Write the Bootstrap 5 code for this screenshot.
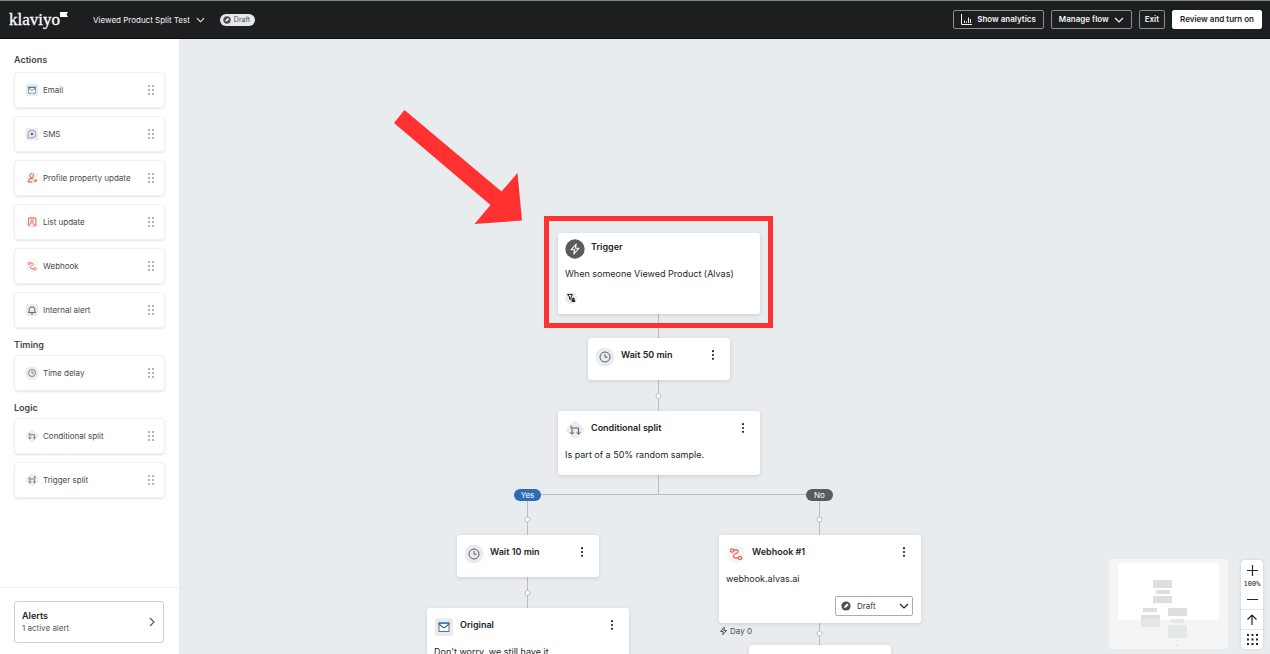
<!DOCTYPE html>
<html lang="en">
<head>
<meta charset="utf-8">
<meta name="viewport" content="width=device-width, initial-scale=1">
<title>Viewed Product Split Test</title>
<link href="https://cdn.jsdelivr.net/npm/bootstrap@5.3.0/dist/css/bootstrap.min.css" rel="stylesheet">
<style>
body{font-family:Inter,"Liberation Sans",sans-serif;font-size:9px;line-height:16px;color:#232628;background:#e8ecee}
svg{display:block;fill:none;stroke:currentColor;flex:none}
.topbar{height:39px;background:#1c1e20;border-top:1px solid #7b8d80;border-bottom:1px solid #0b0c0d;color:#f4f5f5;padding:0 8px 0 9px}
.logo{font:17px/20px "Liberation Serif",serif;color:#fff;-webkit-text-stroke:.3px #fff}
.flow-name{background:none;border:0;color:inherit;font-size:8px;padding:0;margin-left:25px;gap:6px}
.draft-pill{background:#e6e9eb;color:#4b4f52;border-radius:6px;height:12px;padding:0 5px 0 3px;margin-left:15px;font-size:7px;line-height:12px;gap:3px}
.bar-actions{gap:7px}
.bar-btn{--bs-btn-padding-x:7px;--bs-btn-padding-y:0;--bs-btn-font-size:8px;--bs-btn-font-weight:600;--bs-btn-line-height:17px;--bs-btn-border-radius:2px;--bs-btn-color:#f4f5f5;--bs-btn-border-color:#8b8f91;--bs-btn-hover-color:#fff;--bs-btn-hover-border-color:#fff;white-space:nowrap;gap:5px}
.bar-btn.compact{--bs-btn-padding-x:5px}
.bar-btn.solid{--bs-btn-bg:#fff;--bs-btn-color:#1c1e20;--bs-btn-border-color:#fff}
.side{width:179px;background:#fff}
.palette{padding:0 14px}
.side h2{font-size:9px;line-height:16px;font-weight:600;color:#43474a;margin:0;padding:9px 0 2px}
.side h2:first-child{padding-top:13px;padding-bottom:4px}
.tile{height:36px;border:1px solid #eff0f1;border-radius:4px;box-shadow:0 1px 2px #0000001c;padding:0 10px;font-size:8px;color:#44494c}
.tile .grip{color:#8f9496}
.alerts{border:1px solid #cdd1d3;border-radius:3px;background:#fff;height:42px;padding:0 8px 0 7px;font-size:8px;line-height:13px;color:#555a5d;text-align:left}
.alerts strong{font-size:9px;font-weight:600;color:#232628}
.side-foot{border-top:1px solid #eceeef;padding:13px 15px 11px 14px}
.canvas{min-width:0}
.wires{left:0;top:0;stroke:#b9bdbf}
.step{background:#fff;border-radius:3px;box-shadow:0 1px 4px #0000001f;padding:9px 9px 0 7px;width:202px}
.step.small-step{width:142px;height:42px}
.step h3{font-size:9px;line-height:16px;font-weight:600;margin:0}
.step p{margin:7px 0 0}
.ico{width:20px;height:20px;margin-right:6px}
.kebab{border:0;background:none;padding:0;width:16px;height:16px;color:#232628}
.n-trigger{left:379px;top:194px;height:81px;padding-top:6px}
.n-wait50{left:409px;top:299px}
.n-split{left:379px;top:372px;height:64px}
.n-wait10{left:278px;top:496px}
.n-original{left:248px;top:569px;height:100px}
.n-webhook{left:540px;top:496px;height:88px}
.n-next{left:570px;top:606px}
.n-day{left:540px;top:584px;font-size:8px;color:#4b4f52;gap:2px}
.filter-dot{width:12px;height:12px;margin-top:10px}
.branch{width:27px;height:12px;border-radius:6px;font-size:8px;line-height:12px;color:#fff;text-align:center;top:450px}
.b-yes{left:335px;background:#2b6cb5}
.b-no{left:627px;background:#595c5e}
.state{width:78px;margin:9px -1px 0 auto}
.state select{font-size:8px;line-height:18px;padding:0 0 0 21px;height:20px;border:1px solid #a9adaf;border-radius:2px;background:#fff;color:#35393c;appearance:none;width:100%}
.state .s-dot{left:6px;top:5px}
.state .s-chev{right:4px;top:7px;pointer-events:none}
.callout{left:365px;top:177px;width:229px;height:112px;border:5px solid #ff3131;pointer-events:none}
.arrow{left:214px;top:71px;fill:#ff3131;stroke:none;pointer-events:none}
.minimap{right:42px;bottom:5px;width:119px;height:90px;background:#f4f5f4;border-radius:3px}
.zoomer{right:7px;bottom:5px;width:22px;background:#fff;border-radius:4px;box-shadow:0 0 3px #00000022}
.zoomer button{border:0;background:none;padding:0;width:22px;height:20px;display:grid;place-items:center;color:#232628}
.zoomer button.ruled{border-top:1px solid #e3e6e7}
.zoomer output{font:7px/9px "DejaVu Sans Mono",monospace;text-align:center}
</style>
</head>
<body class="vh-100 d-flex flex-column overflow-hidden">
<svg class="d-none">
  <symbol id="grip" viewBox="0 0 6 10"><g fill="currentColor" stroke="none"><circle cx="1" cy="1" r=".9"/><circle cx="5" cy="1" r=".9"/><circle cx="1" cy="5" r=".9"/><circle cx="5" cy="5" r=".9"/><circle cx="1" cy="9" r=".9"/><circle cx="5" cy="9" r=".9"/></g></symbol>
  <symbol id="dots" viewBox="0 0 4 10"><g fill="currentColor" stroke="none"><circle cx="2" cy="1.2" r="1.1"/><circle cx="2" cy="5" r="1.1"/><circle cx="2" cy="8.8" r="1.1"/></g></symbol>
  <symbol id="chev" viewBox="0 0 10 6"><path d="M1 1l4 4 4-4" stroke-width="1.2"/></symbol>
  <symbol id="draft" viewBox="0 0 10 10"><circle cx="5" cy="5" r="4.6" fill="#4b4f52" stroke="none"/><path d="M3 7l.5-2 2.600-2.400 1.500 1.400L5 6.500z" fill="#fff" stroke="none"/></symbol>
  <symbol id="mail" viewBox="0 0 20 20"><rect x="1" y="1" width="18" height="18" rx="3" fill="#e8ecee" stroke="none"/><rect x="5" y="6" width="10" height="8.500" fill="#fff" stroke="#6b7073"/><path d="M4.500 6.200h11M5 7l4 3.400h2L15 7" stroke="#2b6cb5" stroke-width="1.200"/></symbol>
  <symbol id="sms" viewBox="0 0 20 20"><rect x="1" y="1" width="18" height="18" rx="3" fill="#e8ecee" stroke="none"/><path d="M4.500 15.500V10a5.500 5.500 0 1 1 5.500 5.500z" stroke="#777c7f"/><circle cx="10" cy="10" r="1.800" fill="#2b6cb5" stroke="none"/></symbol>
  <symbol id="person" viewBox="0 0 20 20"><path d="M10 0l8.500 5v10L10 20l-8.500-5V5z" fill="#f4f5f4" stroke="none"/><g stroke="#ee6a5f" stroke-width="1.500"><circle cx="9.500" cy="6.500" r="2.700"/><path d="M10.500 15.500H5c0-4 2-5 4.500-5 1.500 0 2 .3 2.500 1M12 14h4.500M14.500 12l2 2-2 2"/></g></symbol>
  <symbol id="list" viewBox="0 0 20 20"><path d="M10 0l8.500 5v10L10 20l-8.500-5V5z" fill="#f0f1f1" stroke="none"/><g stroke="#ee6a5f" stroke-width="1.300"><path d="M5 15.500V4.500h10.500v10M12 15.500h3.500v-3M8.500 3.500v2M12.500 3.500v2"/><circle cx="10" cy="8.500" r="1.600"/><path d="M6.500 15.500c0-3.500 1.500-4.500 3.500-4.500s2 1 2.500 3.500"/></g></symbol>
  <symbol id="hook" viewBox="0 0 20 20"><path d="M10 0l8.500 5v10L10 20l-8.500-5V5z" fill="#f4f5f4" stroke="none"/><g stroke="#ee6a5f" stroke-width="1.300"><circle cx="6.200" cy="6.500" r="1.700"/><circle cx="14" cy="14" r="1.700"/><path d="M8 6h2.500c1.500 0 1.800 1 1.500 2s-1.500 1.500-2.500 1.700-2 1-2 2.300.8 2 2 2h2.800"/></g></symbol>
  <symbol id="bell" viewBox="0 0 20 20"><rect x="1" y="1" width="18" height="18" rx="3" fill="#e8ecee" stroke="none"/><path d="M4.500 13.500c1.500-1 1.500-2 1.500-4a4 4 0 0 1 8 0c0 2 0 3 1.500 4zM8.500 15.500h3" stroke="#4b4f52" stroke-width="1.200"/></symbol>
  <symbol id="clock" viewBox="0 0 20 20"><circle cx="10" cy="10" r="9.500" fill="#e8ecee" stroke="none"/><g stroke="#5a5f62"><circle cx="10" cy="10" r="5"/><path d="M10 7v3.200h2.600"/></g></symbol>
  <symbol id="split" viewBox="0 0 20 20"><rect x="3" y="3" width="14" height="14" rx="2" transform="rotate(45 10 10)" fill="#e8ecee" stroke="none"/><path d="M6 5.500v2.500h7.500v6M7 8v6M5 12.300l2 1.800 2-1.800M11.500 12.300l2 1.800 2-1.800" stroke="#5a5f62"/></symbol>
  <symbol id="tsplit" viewBox="0 0 20 20"><rect x="3" y="3" width="14" height="14" rx="2" transform="rotate(45 10 10)" fill="#e8ecee" stroke="none"/><path d="M6 5.500v3h7.500V14M7 8.500V14M5 12.300l2 1.800 2-1.800M11.500 12.300l2 1.800 2-1.800M14.500 4l-1.500 2h2.500L14 7.800" stroke="#5a5f62"/></symbol>
  <symbol id="bolt" viewBox="0 0 12 12"><path d="M7 1L2 6.700h3.500L5 11l5-5.700H6.500z" stroke-width="1.300" stroke-linejoin="round"/></symbol>
</svg>

<header class="topbar d-flex align-items-center flex-shrink-0">
  <a href="#" class="d-flex text-decoration-none"><span class="logo">klaviyo</span><svg width="8" height="20"><path d="M0 2h8L6.500 4.500 8 7H0z" fill="#fff" stroke="none"/></svg></a>
  <button class="flow-name d-flex align-items-center" type="button">Viewed Product Split Test <svg width="9" height="6"><use href="#chev"/></svg></button>
  <span class="draft-pill d-flex align-items-center"><svg width="8" height="8"><use href="#draft"/></svg>Draft</span>
  <div class="bar-actions d-flex ms-auto">
    <button type="button" class="btn bar-btn d-flex align-items-center"><svg width="11" height="11"><path d="M.5 0v10.500H11M3.500 9V6.500M5.500 9V7.500M7.500 9V3.500M9.500 9V5"/></svg>Show analytics</button>
    <button type="button" class="btn bar-btn d-flex align-items-center">Manage flow <svg width="10" height="6"><use href="#chev"/></svg></button>
    <button type="button" class="btn bar-btn compact">Exit</button>
    <button type="button" class="btn bar-btn solid">Review and turn on</button>
  </div>
</header>

<div class="d-flex flex-fill overflow-hidden">
  <aside class="side d-flex flex-column flex-shrink-0">
    <div class="palette flex-fill">
      <h2>Actions</h2>
      <div class="d-grid gap-2">
        <div class="tile d-flex align-items-center"><svg class="me-1" width="14" height="14"><use href="#mail"/></svg>Email<svg class="grip ms-auto" width="6" height="10"><use href="#grip"/></svg></div>
        <div class="tile d-flex align-items-center"><svg class="me-1" width="14" height="14"><use href="#sms"/></svg>SMS<svg class="grip ms-auto" width="6" height="10"><use href="#grip"/></svg></div>
        <div class="tile d-flex align-items-center"><svg class="me-1" width="14" height="14"><use href="#person"/></svg>Profile property update<svg class="grip ms-auto" width="6" height="10"><use href="#grip"/></svg></div>
        <div class="tile d-flex align-items-center"><svg class="me-1" width="14" height="14"><use href="#list"/></svg>List update<svg class="grip ms-auto" width="6" height="10"><use href="#grip"/></svg></div>
        <div class="tile d-flex align-items-center"><svg class="me-1" width="14" height="14"><use href="#hook"/></svg>Webhook<svg class="grip ms-auto" width="6" height="10"><use href="#grip"/></svg></div>
        <div class="tile d-flex align-items-center"><svg class="me-1" width="14" height="14"><use href="#bell"/></svg>Internal alert<svg class="grip ms-auto" width="6" height="10"><use href="#grip"/></svg></div>
      </div>
      <h2>Timing</h2>
      <div class="tile d-flex align-items-center"><svg class="me-1" width="14" height="14"><use href="#clock"/></svg>Time delay<svg class="grip ms-auto" width="6" height="10"><use href="#grip"/></svg></div>
      <h2>Logic</h2>
      <div class="d-grid gap-2">
        <div class="tile d-flex align-items-center"><svg class="me-1" width="14" height="14"><use href="#split"/></svg>Conditional split<svg class="grip ms-auto" width="6" height="10"><use href="#grip"/></svg></div>
        <div class="tile d-flex align-items-center"><svg class="me-1" width="14" height="14"><use href="#tsplit"/></svg>Trigger split<svg class="grip ms-auto" width="6" height="10"><use href="#grip"/></svg></div>
      </div>
    </div>
    <div class="side-foot">
      <button type="button" class="alerts w-100 d-flex align-items-center justify-content-between"><span class="d-flex flex-column"><strong>Alerts</strong>1 active alert</span><svg width="6" height="10"><path d="M1 1l4 4-4 4" stroke-width="1.200"/></svg></button>
    </div>
  </aside>

  <main class="canvas flex-fill position-relative overflow-hidden">
    <svg class="wires position-absolute" width="100%" height="100%">
      <path d="M479.500 275v181M348.500 455.500h292M348.500 455v115M640.500 455v152"/>
      <g fill="#fff"><circle cx="479.500" cy="357" r="2.500"/><circle cx="348.500" cy="480.500" r="2.500"/><circle cx="640.500" cy="480.500" r="2.500"/><circle cx="348.500" cy="554" r="2.500"/><circle cx="640.500" cy="594.500" r="2.500"/></g>
    </svg>

    <section class="step n-trigger position-absolute">
      <div class="d-flex align-items-start"><svg class="ico" viewBox="0 0 20 20"><circle cx="10" cy="10" r="9.700" fill="#595c5e" stroke="none"/><path d="M11.200 5L6 10.800h3.600L8.800 15l5.200-5.800h-3.600z" stroke="#fff" stroke-width="1.100" stroke-linejoin="round"/></svg><h3>Trigger</h3></div>
      <p>When someone Viewed Product (Alvas)</p>
      <svg class="filter-dot" viewBox="0 0 12 12"><circle cx="6" cy="6" r="6" fill="#e8ecee" stroke="none"/><path d="M2.500 2.500h5L6 5v3L4.500 7V5z" stroke="#232628"/><path d="M6.500 10c0-1.500.8-2 1-2.200a1.300 1.300 0 1 1 1.800 0c.6.300 1 1 1 2.200z" fill="#232628" stroke="none"/></svg>
    </section>

    <section class="step small-step n-wait50 position-absolute">
      <div class="d-flex align-items-start"><svg class="ico"><use href="#clock"/></svg><h3>Wait 50 min</h3><button type="button" class="kebab ms-auto d-grid" aria-label="More"><svg class="m-auto" width="4" height="10"><use href="#dots"/></svg></button></div>
    </section>

    <section class="step n-split position-absolute">
      <div class="d-flex align-items-start"><svg class="ico"><use href="#split"/></svg><h3>Conditional split</h3><button type="button" class="kebab ms-auto d-grid" aria-label="More"><svg class="m-auto" width="4" height="10"><use href="#dots"/></svg></button></div>
      <p>Is part of a 50% random sample.</p>
    </section>

    <span class="branch b-yes position-absolute">Yes</span>
    <span class="branch b-no position-absolute">No</span>

    <section class="step small-step n-wait10 position-absolute">
      <div class="d-flex align-items-start"><svg class="ico"><use href="#clock"/></svg><h3>Wait 10 min</h3><button type="button" class="kebab ms-auto d-grid" aria-label="More"><svg class="m-auto" width="4" height="10"><use href="#dots"/></svg></button></div>
    </section>

    <section class="step n-original position-absolute">
      <div class="d-flex align-items-start"><svg class="ico"><use href="#mail"/></svg><h3>Original</h3><button type="button" class="kebab ms-auto d-grid" aria-label="More"><svg class="m-auto" width="4" height="10"><use href="#dots"/></svg></button></div>
      <p>Don't worry, we still have it</p>
    </section>

    <section class="step n-webhook position-absolute">
      <div class="d-flex align-items-start"><svg class="ico"><use href="#hook"/></svg><h3>Webhook #1</h3><button type="button" class="kebab ms-auto d-grid" aria-label="More"><svg class="m-auto" width="4" height="10"><use href="#dots"/></svg></button></div>
      <p>webhook.alvas.ai</p>
      <div class="state position-relative">
        <select aria-label="Status"><option>Draft</option></select>
        <svg class="s-dot position-absolute" width="10" height="10"><use href="#draft"/></svg>
        <svg class="s-chev position-absolute" width="10" height="6"><use href="#chev"/></svg>
      </div>
    </section>
    <div class="n-day position-absolute d-flex align-items-center"><svg width="9" height="10"><use href="#bolt"/></svg>Day 0</div>
    <section class="step small-step n-next position-absolute"></section>

    <div class="callout position-absolute"></div>
    <svg class="arrow position-absolute" width="130" height="116"><path d="M11.500 0L108.500 81.500 124.500 63 129 110.500 81.500 114 97.500 95 1 13z"/></svg>

    <div class="minimap position-absolute">
      <svg viewBox="0 0 119 90" width="119" height="90"><g stroke="none"><path d="M9 4h101v57H9z" fill="#fff"/><path d="M44 21h19v8H44zM47 31h14v4H47zM44 37h19v7H44zM34 49h14v4H34zM32 56h19v4H32zM59 49h19v8H59z" fill="#dcdedf"/><path d="M32 60h19v8H32zM62 60h13v4H62zM59 66h19v13H59z" fill="#e2e7e8"/><path d="M53 44h1v1h-1zM41 71h1v1h-1zM41 76h1v1h-1zM68 81h1v1h-1zM67 86h3v1h-3z" fill="#d5d8d9"/></g></svg>
    </div>
    <div class="zoomer position-absolute d-flex flex-column">
      <button type="button" aria-label="Zoom in"><svg width="11" height="11"><path d="M5.500 0v11M0 5.500h11" stroke-width="1.200"/></svg></button>
      <output>100%</output>
      <button type="button" aria-label="Zoom out"><svg width="11" height="3"><path d="M0 1.500h11"/></svg></button>
      <button type="button" class="ruled" aria-label="Go to top"><svg width="10" height="11"><path d="M5 11V1M.5 5.500L5 1l4.500 4.500" stroke-width="1.200"/></svg></button>
      <button type="button" class="ruled" aria-label="Overview"><svg width="11" height="11"><path fill="currentColor" stroke="none" d="M0 0h2v2H0zM4.500 0h2v2h-2zM9 0h2v2H9zM0 4.500h2v2H0zM4.500 4.500h2v2h-2zM9 4.500h2v2H9zM0 9h2v2H0zM4.500 9h2v2h-2zM9 9h2v2H9z"/></svg></button>
    </div>
  </main>
</div>
<script src="https://cdn.jsdelivr.net/npm/bootstrap@5.3.0/dist/js/bootstrap.bundle.min.js"></script>
</body>
</html>
